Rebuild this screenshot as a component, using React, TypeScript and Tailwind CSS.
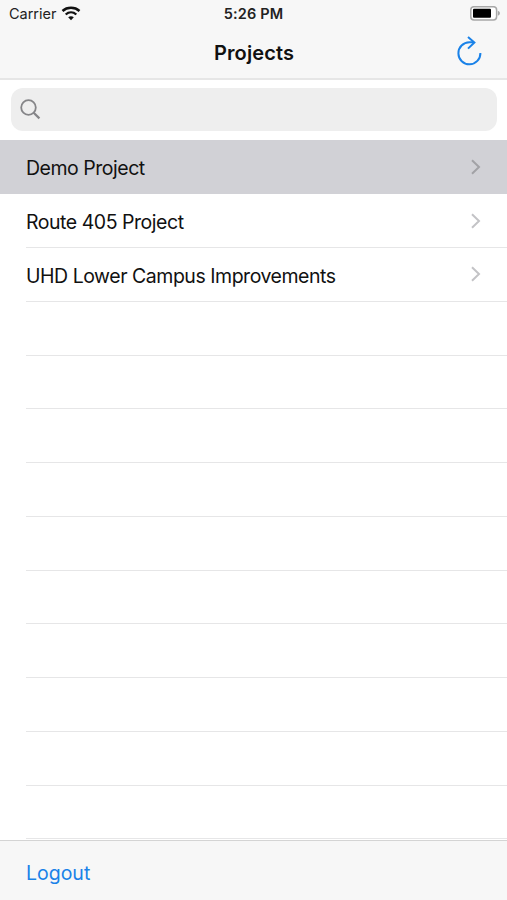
const projects = ["Demo Project", "Route 405 Project", "UHD Lower Campus Improvements"];
const ROW_COUNT = 13;

const WifiIcon = () => (
  <svg width="20" height="15" viewBox="0 0 20 15" fill="none" className="ml-[5px]">
    <path d="M1.5 5C6.2 0.8 13.8 0.8 18.5 5" stroke="#111" strokeWidth="2.5" />
    <path d="M4.7 8.5C7.8 5.7 12.2 5.7 15.3 8.5" stroke="#111" strokeWidth="2.3" />
    <path d="M10 14.2L7.2 11.3C8.8 9.9 11.2 9.9 12.8 11.3Z" fill="#111" />
  </svg>
);

const BatteryIcon = () => (
  <svg width="31" height="15" viewBox="0 0 31 15" fill="none">
    <rect x="0.8" y="0.7" width="25.8" height="13.2" rx="3.2" fill="#fff" stroke="#a8a8a8" strokeWidth="1.5" />
    <rect x="3" y="2.8" width="18" height="9" rx="1" fill="#000" />
    <path d="M27.8 4.8C30.6 5.6 30.6 9 27.8 9.8Z" fill="#a8a8a8" />
  </svg>
);

const RefreshIcon = () => (
  <svg width="26" height="32" viewBox="0 0 26 32" fill="none" stroke="#1a82e8" strokeWidth="2">
    <path d="M23.4 17A11 11 0 1 1 12.4 6.3H17" />
    <path d="M11 0.9L17.4 6.5L11 12.6" />
  </svg>
);

const SearchIcon = () => (
  <svg width="21" height="21" viewBox="0 0 21 21" fill="none" stroke="#858588">
    <circle cx="8.5" cy="8.5" r="7.3" strokeWidth="1.8" />
    <path d="M13.7 13.7L19.4 19.4" strokeWidth="2.2" />
  </svg>
);

const Chevron = ({ active }: { active: boolean }) => (
  <svg
    width="10"
    height="16"
    viewBox="0 0 10 16"
    fill="none"
    strokeWidth="2"
    className={active ? "stroke-[#a2a2a6]" : "stroke-[#c3c3c6]"}
  >
    <path d="M1 1.3L8 8L1 14.7" />
  </svg>
);

const Header = () => (
  <header className="h-20 shrink-0 border-b-2 border-[#e6e6e6] bg-[#f7f7f7]">
    <div className="grid h-[27px] grid-cols-3 items-center pr-[6px] pl-[9px] text-[14.5px] text-[#222]">
      <div className="flex items-center">
        <span className="tracking-[-0.03px]">Carrier</span>
        <WifiIcon />
      </div>
      <span className="-ml-[3px] text-center text-[14.5px] font-semibold tracking-[0.12px]">5:26 PM</span>
      <div className="flex justify-end">
        <BatteryIcon />
      </div>
    </div>
    <div className="grid h-[50px] grid-cols-3 items-center pr-6 pl-[25px]">
      <h1 className="col-start-2 pt-px text-center text-[20px] font-semibold tracking-[0.1px] text-[#111]">Projects</h1>
      <button type="button" aria-label="Refresh" className="justify-self-end">
        <RefreshIcon />
      </button>
    </div>
  </header>
);

const Row = ({ name, active }: { name?: string; active: boolean }) => (
  <li className={active ? "h-[54.35px] bg-[#d1d1d6] pl-[26px]" : "h-[53.75px] pl-[26px]"}>
    <div
      className={
        active
          ? "flex h-full items-center justify-between pr-[26px]"
          : "flex h-full items-center justify-between border-b border-[#e6e6e7] pr-[26px]"
      }
    >
      {name && (
        <>
          <span className={active ? "pt-[3px] tracking-[-0.48px]" : "pt-1 tracking-[-0.47px]"}>{name}</span>
          <Chevron active={active} />
        </>
      )}
    </div>
  </li>
);

export default function App() {
  return (
    <div className="flex h-[900px] w-full flex-col overflow-hidden bg-white font-['Inter',sans-serif] text-[#111]">
      <Header />
      <div className="h-[60px] shrink-0 pt-2 pr-[10px] pl-[11px]">
        <div className="flex h-[43px] items-center rounded-xl bg-[#eeeeee] pl-[9px]">
          <SearchIcon />
        </div>
      </div>
      <ul className="min-h-0 flex-1 text-[19.5px]">
        {Array.from({ length: ROW_COUNT }, (_, i) => (
          <Row key={i} name={projects[i]} active={i === 0} />
        ))}
      </ul>
      <footer className="flex h-[60px] shrink-0 items-center border-t border-[#d4d4d4] bg-[#f7f7f7] pt-[7px] pl-[26px]">
        <button type="button" className="text-[19.5px] text-[#1a82e8]">
          Logout
        </button>
      </footer>
    </div>
  );
}
